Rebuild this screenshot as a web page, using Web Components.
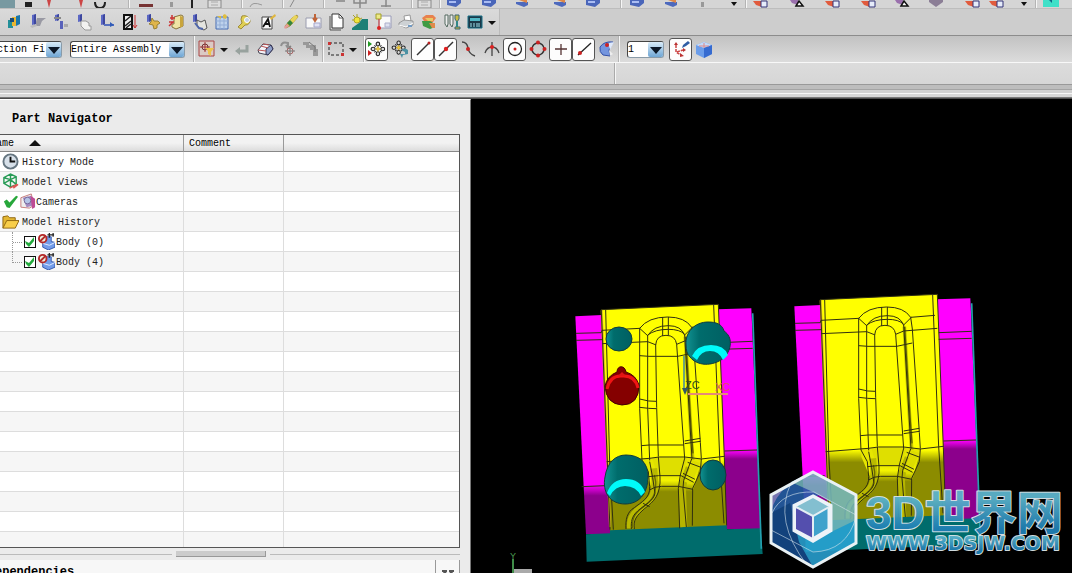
<!DOCTYPE html>
<html lang="en">
<head>
<meta charset="utf-8">
<title>Part Navigator</title>
<style>
html, body { margin: 0; height: 100%; overflow: hidden; background: #d6d6d6; }
body { font: 10px/16px "Liberation Mono", monospace; color: #222; }
</style>
</head>
<body>
<cad-app></cad-app>
<script>
const make = (tag, css, render) => customElements.define(tag, class extends HTMLElement {
  connectedCallback() {
    if (this.shadowRoot) return;
    const root = this.attachShadow({ mode: 'open' });
    root.innerHTML = '<style>' + css + '</style>' + render(this);
  }
});

/* Icon drawings on an 18 x 18 grid */
const pillar = '<path d="M3 2l4-1v10l-4 1z" fill="#5b67c4"/><path d="M5 2l2-1v10l-2 1z" fill="#3d479e"/>';
const compass = '<g fill="#ddd" stroke="#222" stroke-width="1.2"><ellipse cx="9" cy="3.500" rx="2" ry="2.200"/><ellipse cx="9" cy="14.500" rx="2" ry="2.200"/><ellipse cx="3.500" cy="9" rx="2.200" ry="2"/><ellipse cx="14.500" cy="9" rx="2.200" ry="2"/><path d="M5 5l1.500 1.500M13 5l-1.500 1.500M5 13l1.500-1.500M13 13l-1.500-1.500"/></g><path d="M9 6l1 2 2 1-2 1-1 2-1-2-2-1 2-1z" fill="#f0cb3a" stroke="#b08d1c" stroke-width=".6"/>';
const icons = {
  blocks: '<path d="M2 7h5v8H2z" fill="#238f99"/><path d="M6 4h4v9H6z" fill="#e8b632"/><path d="M10 3l4-1v9l-4 2z" fill="#1976aa"/><path d="M4 5h4v4H4z" fill="#194c7a"/>',
  p1: pillar + '<path d="M8 5h9l-4 3-2 5H7V9z" fill="#9999a3"/><path d="M1 13l6-2 1 2-5 2z" fill="#bbb"/>',
  p2: pillar.replaceAll('v10', 'v6') + '<path d="M8 8h3v8H8z" fill="#5962ba"/><path d="M12 11h4v3h-4z" fill="#aaa"/><path d="M2 5h7" stroke="#888" stroke-width="2"/>',
  p3: pillar.replaceAll('v10', 'v7') + '<path d="M6 8h5l3 2v3h2v4h-6l-4-4z" fill="#f2f2f0" stroke="#999"/>',
  p4: pillar + '<path d="M6 12h10" stroke="#5871bf" stroke-width="2"/><path d="M12 9l4 3-4 2z" fill="#315cb8"/>',
  measure: '<path d="M3 2h8v14H3z" fill="#eee" stroke="#111" stroke-width="2"/><path d="M4 8l6-5M4 13l6-5M5 15l5-4" stroke="#222" stroke-width="1.5"/><path d="M14 2v13m-2-3l2 3 2-3" stroke="#c33" fill="none"/>',
  p5: pillar.replaceAll('v10', 'v7') + '<path d="M8 5l2 3 4 0 2 2-3 2 0 3-3 1-1-4-4-1 2-2z" fill="#dfb54b" stroke="#9a8235"/>',
  book: '<path d="M7 4l7-2 2 1v10l-7 3-4-2v-3h2z" fill="#efe4a4" stroke="#88733c"/><path d="M13 3l3 1v9l-3 2z" fill="#c9a53c"/><path d="M5 2v5m-2-2h5M2 13l4-4M2 9h5" fill="none" stroke="#c33" stroke-width="1.500"/>',
  p6: pillar.replaceAll('v10', 'v7') + '<path d="M7 7l4 2 4-2 2 8-3 2-5-2-2-3z" fill="#e4e4df" stroke="#555"/><path d="M5 10l4 5 4 1" stroke="#5067aa" stroke-width="2" fill="none"/>',
  sheet: '<path d="M3 4h12v12H3z" fill="#bed2ec" stroke="#456bb1"/><path d="M3 8h12M3 12h12M7 4v12M11 4v12" stroke="#93add6"/><path d="M10 2l2-1 2 2-1 3-3-1zM4 3h4v3z" fill="#dfbd3e"/>',
  wrench: '<path d="M6 3a6 6 0 0 1 8 6q-2 4-5 3l-4 4-3-2 4-4q-2-4 0-7z" fill="#dfcf55" stroke="#a08c35"/><circle cx="11" cy="7" r="2.500" fill="#c3d0e8" stroke="#fff"/>',
  note: '<path d="M3 4h10v12H3z" fill="#fafafa" stroke="#444"/><path d="M4 14l5-8 2 8M6 11h4" stroke="#111" stroke-width="1.800" fill="none"/><path d="M11 5l5-4 1 2-5 4z" fill="#dfb63f"/>',
  pencil: '<path d="M3 13l7-8 5-3 1 2-8 9-4 2z" fill="#d7b346" stroke="#8c7620" stroke-width=".6"/><path d="M6 9l7-7 3 2-7 8z" fill="#e9d45a"/><path d="M5 10l3 3 3-3-3-3z" fill="#36853f"/><path d="M2 14l3-3 2 2-4 3z" fill="#e59b9b"/>',
  card: '<path d="M1 5h15v10H1z" fill="#f8f8f8" stroke="#9a9caf"/><path d="M9 10h6v4H9z" fill="#dfe1f2" stroke="#a4a6ca"/><path d="M10 1v6M8 5l2 3 2-3" stroke="#bf6439" stroke-width="2" fill="none"/>',
  page: '<path d="M4 1h7l4 4v10H4z" fill="#fff" stroke="#333"/><path d="M11 1v4h4M2 3v14h11" fill="none" stroke="#555"/>',
  layer: '<path d="M1 15l7-5 3-4h6v11H1z" fill="#1d8076"/><path d="M2 2l3 3M6 1v4M1 7h4M11 5l-2 1" stroke="#a7a02a"/><circle cx="6" cy="7" r="3" fill="#f0e53c" stroke="#b3a820"/>',
  mark: '<path d="M5 3h12v12H5z" fill="#f9f9fa" stroke="#999bb8"/><path d="M2 1h5v5H2z" fill="#ece887" stroke="#a3a12a"/><path d="M5 6v8" stroke="#c33"/><circle cx="5" cy="15" r="2" fill="#d22"/><path d="M11 10h5v4h-5z" fill="#dee0ef" stroke="#abaeca"/>',
  print: '<path d="M7 3l6-1 1 6-6 2z" fill="#fff" stroke="#999"/><path d="M2 10l5-3 9 1v4l-7 3-7-3z" fill="#cdd1d4" stroke="#888" stroke-width=".8"/><path d="M2 12l7 2 7-4" fill="none" stroke="#fff"/><path d="M11 12h4v2h-4z" fill="#729ac3"/>',
  swap: '<path d="M2 5l4-3h7l3 3-3 4H7L4 8z" fill="#e8814d"/><path d="M2 8h8l5 3v3l-5 2-7-3z" fill="#409b44"/><path d="M5 5h8v3H8z" fill="#e9c965"/><path d="M9 10h6v5h-3z" fill="#e08a4a"/>',
  bolts: '<path d="M2 2h3v9l-1 3-2-3zM7 2h3v9l-1 3-2-3z" fill="#eee" stroke="#53695e"/><path d="M12 2h4v4l-2 3-2-3zM12 14h5v2h-5z" fill="#c6bb43" stroke="#3d6772"/><path d="M14 8v6" stroke="#388" stroke-width="2"/>',
  calc: '<path d="M2 3h14v12H2z" fill="#1c3848" stroke="#166e85"/><path d="M4 5h10v3H4z" fill="#51b7c5"/><path d="M4 11h2M7 11h2M4 13h2M7 13h2M11 10v4M13 10v4" stroke="#9fe4ee"/>',
  filter: '<path d="M1 1h15v15H1z" fill="#dbcac4" stroke="#a44"/><path d="M2 7h10M7 2v10" stroke="#a33"/><circle cx="7" cy="7" r="3" fill="none" stroke="#733"/><path d="M7 8h9l-3 4v4l-3-2v-3z" fill="#edc44b"/>',
  undo: '<path d="M14 5v6H5" fill="none" stroke="#98a29e" stroke-width="3"/><path d="M7 7l-5 4 5 4z" fill="#98a29e"/>',
  eraser: '<path d="M2 10l5-6 8 1 2 4-5 6-9-2z" fill="#f4f4f9" stroke="#445"/><path d="M10 9l5-4 2 4-5 6-2-1z" fill="#8f9fc8" stroke="#335"/><path d="M5 6l7 2M7 4l6 1M2 10l8 1" stroke="#b55"/>',
  orbit: '<path d="M2 6q1-5 7-3v4m-2-2l2 3 3-2" fill="none" stroke="#909090" stroke-width="2"/><circle cx="11" cy="11" r="3" fill="none" stroke="#a66"/><path d="M11 6v10M6 11h10" stroke="#777"/>',
  chain: '<path d="M1 2h6v3H1zM4 5h5v3H4zM8 5h6v5H8zM11 9h5v7h-5z" fill="#999"/><path d="M7 2l6 5v5" stroke="#777" fill="none"/>',
  select: '<path d="M2 3h14v12H2z" fill="none" stroke="#222" stroke-dasharray="3 2"/><path d="M1 2h3v3H1zM14 13h3v3h-3z" fill="#c33"/>',
  snapA: '<path d="M0 1l4 3-4 3z" fill="#292"/><path d="M0 10l4 3-4 3z" fill="#c22"/><g transform="translate(2 1)scale(.88)">' + compass + '</g>',
  snapB: '<g transform="translate(0 0)scale(.85)">' + compass + '</g><path d="M10 10q4-3 7 0v4l-5 1-1 3-2-4h5v-2z" fill="#4b91a3"/>',
  line: '<path d="M3 15L15 3" stroke="#333" stroke-width="1.5"/><circle cx="15" cy="3" r="1.5" fill="#b22"/>',
  mid: '<path d="M2 16L16 2" stroke="#333" stroke-width="1.5"/><circle cx="9" cy="9" r="2.2" fill="#d22"/>',
  curve: '<path d="M2 2q5 0 6 6t7 8" fill="none" stroke="#444" stroke-width="1.5"/><circle cx="8" cy="9" r="2" fill="#c22"/>',
  cross: '<path d="M2 13q2-6 7-6t7 6M9 2v14" fill="none" stroke="#444" stroke-width="1.3"/><circle cx="9" cy="7" r="2" fill="#d22"/>',
  centre: '<circle cx="9" cy="9" r="6.5" fill="none" stroke="#222" stroke-width="1.3"/><circle cx="9" cy="9" r="1.5" fill="#c22"/>',
  quad: '<circle cx="9" cy="9" r="6" fill="none" stroke="#333" stroke-width="1.5"/><g fill="#c22"><circle cx="9" cy="2.5" r="2"/><circle cx="9" cy="15.500" r="2"/><circle cx="2.500" cy="9" r="2"/><circle cx="15.500" cy="9" r="2"/></g>',
  plus: '<path d="M9 4v11M3 9h12" stroke="#533" stroke-width="1.300"/>',
  tangent: '<path d="M3 15L16 3" stroke="#222" stroke-width="1.300"/><circle cx="5" cy="13" r="2" fill="#c22"/>',
  face: '<path d="M2 7q4-6 13-5l-4 8 1 6-7-1q-4-3-3-8z" fill="#7495de" stroke="#3552a7"/><path d="M11 3l5-1-4 8-1-4z" fill="#dfe9fa"/><path d="M11 10l4 4-3 2z" fill="#eee"/><circle cx="9" cy="5" r="2" fill="#c22"/>',
  triad: '<path d="M4 5v7l5 3M5 12l6-2" fill="none" stroke="#c44" stroke-width="1.500" stroke-dasharray="3 1"/><path d="M2 5l2-3 2 3zM8 13l4 3-4 1zM11 8l3 2-3 2z" fill="#b33"/><path d="M10 8l1-3 5-4 2 2-4 3z" fill="#2f5da4"/>',
  cube: '<path d="M1 5l8-3 8 3v9l-8 4-8-4z" fill="#6b9dea"/><path d="M1 5l8-3 8 3-8 3z" fill="#c5dcfa"/><path d="M9 8l8-3v9l-8 4z" fill="#366bd0"/><path d="M9 3v5M4 6h10" stroke="#d88"/>',
  drop: '<path d="M5 8h8l-4 4z" fill="#111"/>',
  /* lower ends of the icons in the first strip */
  e_teal: '<path d="M0 0h18v12H0z" fill="#7899a1"/>', e_black: '<path d="M6 2h7v5H6z" fill="#222"/>',
  e_red: '<path d="M7 0h4l-2 8z" fill="#c44"/>', e_arc: '<path d="M4 2q0 6 5 6t5-6" fill="none" stroke="#222" stroke-width="2"/>',
  e_bar: '<path d="M2 4h14v3H2z" fill="#733"/>', e_gray: '<path d="M7 2h3v5H7z" fill="#999"/>', e_tick: '<path d="M9 0v8" stroke="#222" stroke-width="2"/>',
  e_box: '<path d="M2 0h13v8H2z" fill="#ddd" stroke="#888"/><path d="M5 2h7M5 5h7" stroke="#aaa"/>',
  e_curve: '<path d="M1 7q2-6 12-2" fill="none" stroke="#999"/>', e_slash: '<path d="M5 7l4-7" stroke="#888"/>',
  e_line: '<path d="M4 0h9v2H4z" fill="#999"/>', e_grid: '<path d="M3 0v3h12V0M9 0v8" fill="none" stroke="#888" stroke-width="1.500"/>',
  e_tee: '<path d="M9 0v7M4 6h10" stroke="#888" stroke-width="1.500"/>',
  e_blue: '<path d="M2 0h14v3l-5 4-9-2z" fill="#4a66ba"/><path d="M4 1h7v2H4z" fill="#a9bcf3"/>',
  e_mix: '<path d="M2 2h12v3l-4 2-8-3z" fill="#4d69bd"/><path d="M5 0h8v3z" fill="#de8848"/>',
  e_orange: '<path d="M2 1h9v6l-6-2z" fill="#e15b3d"/><path d="M10 1h6v6h-6z" fill="#e6ecfa" stroke="#337"/>',
  e_purple: '<path d="M2 0h8v5L4 3z" fill="#9a70ad"/><path d="M8 6l3-5 4 5z" fill="#fff" stroke="#111" stroke-width="1.500"/>',
  e_diamond: '<path d="M2 0h14v2L9 7 2 2z" fill="#8b7e96"/>',
  e_cyan: '<path d="M1 0h16v7H1z" fill="#3fe0c8"/><path d="M7 0h3v3z" fill="#168"/>',
  e_drop: '<path d="M6 2h6l-3 4z" fill="#111"/>',
  /* navigator */
  clock: '<circle cx="9" cy="9" r="7.500" fill="#d7e0e9" stroke="#667681" stroke-width="2"/><path d="M9 4v5h5" stroke="#111" stroke-width="2" fill="none"/>',
  views: '<path d="M2 5l7-4 6 3v8l-6 3-7-4zM2 5l7 2 6-3M9 1v14M2 11l7-4 6 5" stroke="#279b55" fill="none" stroke-width="1.500"/><path d="M8 16l8-4M12 16l5-4" stroke="#d55" fill="none" stroke-width="1.500"/>',
  check: '<path d="M2 9l3-2 3 3 7-7 2 1-9 12-3-1z" fill="#27a73b"/>',
  camera: '<path d="M2 5l11-4 3 12-5 3-9-1z" fill="#eee" stroke="#c67979"/><path d="M4 5l9-2 3 10-8 2z" fill="#a58ac1"/><path d="M12 3l5 3v9l-3 2z" fill="#be4c94"/><circle cx="9" cy="8" r="3.500" fill="#b4c4e7" stroke="#766899"/>',
  folder: '<path d="M1 16V4l5-1 2 2h6v4" fill="#e3b733" stroke="#8e650f"/><path d="M1 16l4-8h13l-4 8z" fill="#f8ce4a" stroke="#8e650f"/>',
  body: '<path d="M5 10l4-2V4h5v5l4 1v5l-7 3-6-3z" fill="#729ce9" stroke="#3458ad"/><path d="M5 11l7 2 6-3" fill="none" stroke="#e3edff"/><circle cx="5" cy="6" r="4" fill="#eed" stroke="#b32828" stroke-width="2"/><path d="M2 9l6-6" stroke="#b32828" stroke-width="2"/><path d="M10 2h7M12 0v5M16 0v4" stroke="#222" stroke-width="1.300"/>'
};

make('tool-icon', ':host{display:block;width:18px;height:18px}svg{display:block;width:100%;height:100%}',
  el => `<svg viewBox="0 0 18 18" aria-hidden="true">${icons[el.getAttribute('name')]}</svg>`);

make('tool-button', `:host{display:block;flex:none;width:23px;height:23px}
:host([narrow]){width:12px}
button{all:unset;box-sizing:border-box;width:100%;height:100%;display:flex;align-items:center;justify-content:center;overflow:hidden}
tool-icon{flex:none}
:host([pressed]) button{background:#fdfdfd;border:1px solid #555;border-radius:3px}`,
  el => `<button aria-label="${el.getAttribute('icon')}"><tool-icon name="${el.getAttribute('icon')}"></tool-icon></button>`);

make('tool-divider', ':host{display:block;flex:none;width:1px;align-self:stretch;background:#b4b4b4;border-right:1px solid #f6f6f6}', () => '');

make('combo-box', `:host{display:block;flex:none;position:relative;height:17px}
select{appearance:none;box-sizing:border-box;width:100%;height:17px;margin:0;padding:0 15px 0 0;border:1px solid #555;border-color:#444 #8a9ba8 #8a9ba8 #444;border-radius:3px;background:#fff;color:#000;font:inherit;line-height:15px;display:block}
span{position:absolute;right:1px;top:1px;width:15px;height:15px;background:linear-gradient(#d9ecfa,#6fa6d4);border-radius:2px;pointer-events:none}
span::after{content:"";position:absolute;left:2px;top:5px;border:6px solid transparent;border-top:7px solid #0c1828;border-bottom:0}`,
  el => `<select aria-label="${el.getAttribute('label')}"><option>${el.getAttribute('value')}</option></select><span></span>`);

make('edge-strip', `:host{display:flex;align-items:flex-start;height:8px;overflow:hidden;background:#d5d5d5;border-bottom:1px solid #bdbdbd}
tool-icon{flex:none}`, () => {
  /* each entry: centre of the item along the strip, icon name */
  const spec = [[6,'e_teal'],[28,'e_black'],[49,'e_red'],[81,'e_red'],[100,'e_arc'],[129,'|'],[146,'e_bar'],[172,'e_gray'],[192,'e_tick'],[215,'e_box'],[242,'|'],[258,'e_curve'],[283,'|'],[294,'e_slash'],[324,'|'],[341,'e_line'],[360,'e_grid'],[386,'e_tee'],[412,'|'],[425,'e_box'],[440,'|'],[454,'e_blue'],[489,'e_blue'],[523,'e_mix'],[561,'e_mix'],[593,'e_blue'],[621,'|'],[637,'e_blue'],[672,'e_mix'],[703,'e_gray'],[734,'e_drop'],[746,'|'],[760,'e_orange'],[797,'e_purple'],[832,'e_orange'],[868,'e_orange'],[902,'e_purple'],[936,'e_diamond'],[972,'e_orange'],[996,'e_orange'],[1024,'e_drop'],[1036,'|'],[1051,'e_cyan']];
  let end = 0;
  return spec.map(([c, n]) => {
    const half = n === '|' ? 1 : 9, gap = c - half - end;
    end = c + half;
    return n === '|' ? `<tool-divider style="margin-left:${gap}px"></tool-divider>` : `<tool-icon name="${n}" style="margin-left:${gap}px"></tool-icon>`;
  }).join('');
});

make('main-strip', `:host{display:flex;height:26px;background:#cdcdcd;border-bottom:1px solid #8c8c8c}
div{display:flex;align-items:center;padding:0 1px 0 3px;background:linear-gradient(#dadada,#cfcfcf);border-right:1px solid #bbb}`,
  () => '<div>' + ['blocks','p1','p2','p3','p4','measure','p5','book','p6','sheet','wrench','note','pencil','card','page','layer','mark','print','swap','bolts','calc'].map(i => `<tool-button icon="${i}"></tool-button>`).join('') + '<tool-button narrow icon="drop"></tool-button></div>');

make('selection-strip', `:host{display:flex;align-items:center;height:26px;background:linear-gradient(#c2c2c2,#dcdcdc);border-bottom:1px solid #f8f8f8}
.filter{width:66px;margin:0 8px 0 -4px}.scope{width:115px}.layer{width:37px;margin:0 5px 0 7px}
.gap{margin-left:8px}.near{margin-left:4px}`, () => {
  const b = (i, p = '') => `<tool-button icon="${i}" ${p}></tool-button>`;
  return `<combo-box class="filter" label="Filter" value="ction Fi"></combo-box>
<combo-box class="scope" label="Scope" value="Entire Assembly"></combo-box>
<tool-divider class="gap"></tool-divider>${b('filter')}${b('drop', 'narrow')}${b('undo')}${b('eraser')}${b('orbit')}${b('chain')}
<tool-divider></tool-divider>${b('select')}${b('drop', 'narrow')}<tool-divider class="near"></tool-divider>
${b('snapA','pressed')}${b('snapB')}${b('line','pressed')}${b('mid','pressed')}${b('curve')}${b('cross')}${b('centre','pressed')}${b('quad')}${b('plus','pressed')}${b('tangent','pressed')}${b('face')}
<tool-divider></tool-divider><combo-box class="layer" label="Layer" value="1"></combo-box>${b('triad','pressed')}${b('cube')}`;
});

make('cue-line', `:host{display:block}
.cells{display:flex;height:21px;background:linear-gradient(#dcdcdc,#d6d6d6)}
.cells div:first-child{flex:0 0 614px;border-right:1px solid #aaa}
.cells div:last-child{flex:1;border-left:1px solid #f6f6f6}
.rail{height:15px;background:linear-gradient(#999 0 1px,#bdbdbd 1px 5px,#a4a4a4 5px 6px,#d0d0d0 6px 9px,#f5f5f5 9px 10px,#d6d6d6 10px 13px,#777 13px 14px,#4c4c4c 14px)}`,
  () => '<div class="cells"><div></div><div></div></div><div class="rail"></div>');

const tick = "url(\"data:image/svg+xml,%3Csvg xmlns='http://www.w3.org/2000/svg' viewBox='0 0 10 10'%3E%3Cpath d='M0 4l4 2 5-6v4L4 10 1 7z' fill='%2322aa3c'/%3E%3C/svg%3E\")";
make('part-navigator', `:host{display:flex;flex-direction:column;flex:0 0 471px;box-sizing:border-box;min-height:0;padding-right:10px;background:#ebebeb;border-top:1px solid #fff;border-right:1px solid #777}
h2{margin:0;padding:11px 12px 7px;font-size:12px;line-height:16px;font-weight:700;color:#000}
.list{flex:1;min-height:0;overflow:hidden;border:solid #555;border-width:1px 1px 1px 0;background:#fff}
table{width:100%;border-collapse:separate;border-spacing:0;table-layout:fixed}
th,td{box-sizing:border-box;padding:0;text-align:left;font-weight:400;border-right:1px solid #ddd;white-space:nowrap}
th:last-child,td:last-child{border-right:0}
th{height:17px;line-height:14px;padding-top:2px;color:#000;border-bottom:1px solid #888;border-right-color:#999;background:linear-gradient(#f2f2f2 50%,#dcdcdc)}
th:nth-child(2){padding-left:5px}
th i{display:inline-block;margin-left:15px;border:6px solid transparent;border-top:0;border-bottom:6px solid #111}
th:first-child span{margin-left:-4px}
td{height:20px;border-bottom:1px solid #ddd}
tr:nth-child(even) td{background:#f6f6f6}
label,.item{display:flex;align-items:center;height:19px;padding-left:2px;gap:3px}
.item span,label span{padding-top:2px}
.item tool-icon,label tool-icon{width:17px;height:17px;flex:none}
.cam{gap:0}
label{gap:1px;padding-left:12px}
label::before{content:"";width:10px;height:20px;box-sizing:border-box;border-left:1px dotted #999;background:repeating-linear-gradient(90deg,#999 0 1px,transparent 1px 2px) 0 10px/100% 1px no-repeat}
tr.last label::before{height:11px;align-self:flex-start}
input{appearance:none;box-sizing:border-box;width:12px;height:12px;margin:0 1px;border:1px solid #111;background:#fff ${tick} center/10px no-repeat}
.grip{flex:none;display:flex;align-items:center;gap:4px;height:12px}
.grip::before{content:"";width:172px;border-top:1px solid #bbb}
.grip::after{content:"";flex:1;border-top:1px solid #bbb}
.grip b{width:90px;height:6px;box-sizing:border-box;background:#ccc;border:solid #999;border-width:0 1px 1px 0}
.deps{flex:none;display:flex;justify-content:space-between;height:13px;overflow:hidden;background:#f7f7f7}
.deps h3{margin:0 0 0 -5px;padding-top:4px;font-size:12px;line-height:16px;color:#000}
.deps button{all:unset;box-sizing:border-box;width:25px;height:24px;padding:6px 6px 0;border:solid #999;border-width:0 1px}
.deps svg{display:block}`, () => {
  const row = c => `<tr><td>${c}</td><td></td><td></td></tr>`;
  const item = (ics, text, cls = '') => row(`<div class="item ${cls}">${ics.map(i => `<tool-icon name="${i}"></tool-icon>`).join('')}<span>${text}</span></div>`);
  const body = (n, cls) => `<tr class="${cls}"><td><label><input type="checkbox" checked><tool-icon name="body"></tool-icon><span>Body (${n})</span></label></td><td></td><td></td></tr>`;
  return `<h2>Part Navigator</h2><div class="list"><table>
<colgroup><col style="width:184px"><col style="width:100px"><col></colgroup>
<thead><tr><th><span>ame</span><i></i></th><th>Comment</th><th></th></tr></thead><tbody>
${item(['clock'], 'History Mode')}${item(['views'], 'Model Views')}${item(['check', 'camera'], 'Cameras', 'cam')}${item(['folder'], 'Model History')}
${body(0, '')}${body(4, 'last')}${row('').repeat(16)}</tbody></table></div>
<div class="grip"><b></b></div>
<div class="deps"><h3>ependencies</h3><button aria-label="Expand"><svg width="12" height="10" viewBox="0 0 12 10"><path d="M0 0h5v2H4l2 3 2-3H7V0h5v2h-1L7 9H5L1 2H0z" fill="#555"/></svg></button></div>`;
});

/* Brand mark that floats over the lower right corner of the scene */
make('site-mark', ':host{display:block;position:absolute;right:0;bottom:0;width:304px;height:106px}svg{display:block}', () => `
<svg width="304" height="106" viewBox="768 467 304 106">
<defs><linearGradient id="t" x2="0" y2="1"><stop offset=".2" stop-color="#5db4cc"/><stop offset=".8" stop-color="#2080b4"/></linearGradient></defs>
<g opacity=".86"><path d="M813 472l-42 23v48l32-17v-23l10-6 28-8z" fill="#2862ae"/>
<path d="M813 472l43 23v34l-25 9v-36l-18-10-22-10z" fill="#75b9c1"/>
<path d="M813 472q-35 12-42 40v-17z" fill="#8a87cf"/>
<path d="M856 520v23l-43 24-42-24 32-14 10 11 18-8z" fill="#2ba6d8"/>
<path d="M771 543l42 24-14-25-9-39-19 10z" fill="#164d91"/></g>
<path d="M772 513q10-22 42-21l42 23M856 517q-9 34-43 35l-42-22M791 483q-18 38 16 82" fill="none" stroke="#d5e5ed" opacity=".6"/>
<path d="M813 497l17 9v24l-17 10-18-10v-24z" fill="#3fa2cc" stroke="#edf3f8" stroke-width="5"/>
<path d="M813 498l16 9-16 9-17-9z" fill="#83bfd0"/><path d="M796 507l17 9v22l-17-9z" fill="#544fae"/>
<path d="M796 507l17 9 16-9M813 516v22" fill="none" stroke="#e4eef4" stroke-width="2"/>
<path d="M813 472l43 23v48l-43 24-42-24v-48z" fill="none" stroke="#e9f1f4" stroke-width="3"/>
<g fill="url(#t)" stroke="#dbe6ea" stroke-width="2" paint-order="stroke" stroke-linejoin="round" font-weight="700" opacity=".95">
<text x="866" y="529" font-family="Liberation Sans, Noto Sans CJK SC, sans-serif" font-size="46">3D世界网</text>
<text x="866" y="550" font-family="DejaVu Sans, sans-serif" font-size="19">WWW.3DSJW.COM</text></g>
</svg>`);

make('scene-view', `:host{display:block;flex:1;min-width:0;position:relative;overflow:hidden;background:#000}
.scene{display:block;width:100%;height:100%}`, () => `
<svg class="scene" viewBox="471 99 601 474" preserveAspectRatio="xMinYMax slice" aria-hidden="true">
<defs>
<linearGradient id="pl" gradientUnits="userSpaceOnUse" x1="0" y1="570" x2="0" y2="602"><stop stop-color="#f0f"/><stop offset="1" stop-color="#8c008c"/></linearGradient>
<linearGradient id="pr" gradientUnits="userSpaceOnUse" x1="0" y1="466" x2="0" y2="492"><stop stop-color="#f0f"/><stop offset="1" stop-color="#8c008c"/></linearGradient>
<linearGradient id="yl" gradientUnits="userSpaceOnUse" x1="0" y1="495" x2="0" y2="532"><stop stop-color="#ff0"/><stop offset="1" stop-color="#8c8c00"/></linearGradient>
<linearGradient id="ym" gradientUnits="userSpaceOnUse" x1="0" y1="535" x2="0" y2="590"><stop stop-color="#e6e600"/><stop offset=".4" stop-color="#f4f400"/><stop offset="1" stop-color="#8c8c00"/></linearGradient>
<linearGradient id="ball"><stop stop-color="#119292"/><stop offset=".3" stop-color="#006c6c"/><stop offset="1" stop-color="#005f62"/></linearGradient>
<g id="part" transform="scale(.33333)" stroke-linejoin="round">
<path d="M43 64l80-4 27 658H75z" fill="url(#pl)"/>
<path d="M470 43l101-3 28 663H495z" fill="url(#pr)"/>
<path d="M75 718l72-3V704l350-16 1 15 101-3 6 77-528 23z" fill="#006c6c"/>
<path d="M121 44l351-16 18 460 7 203-350 15z" fill="url(#yl)"/>
<path d="M122 46l25 650" stroke="#d3b322" stroke-width="6"/>
<path d="M243 490l178-2v12l-26 92h-40l-1 20h-52l-26-22-32-75z" fill="url(#ym)"/>
<path d="M294 487l-20 3 15 52h75l15-54z" fill="#dfdf00"/>
<g fill="none"><path d="M278 520l4 40C284 612 260 620 238 640 210 660 208 676 208 700" stroke="#b9b900" stroke-width="21"/>
<path d="M280 540l4 20C286 612 264 620 242 640 216 660 214 676 214 700" stroke="#6c6c00" stroke-width="4"/>
<path d="M385 518l-18 44-3 24 4 110" stroke="#b5b500" stroke-width="22"/><path d="M406 500l-25 64" stroke="#dddd00" stroke-width="24"/>
<path d="M373 125l15 260 7 110" stroke="#c4c400" stroke-width="11"/><path d="M374 125l16 270 6 80" stroke="#5a5a00" stroke-width="4"/>
<path d="M575 55l26 706" stroke="#249fae" stroke-width="5"/></g>
<g fill="none" stroke="#302f10" stroke-width="3">
<path d="M121 44l351-16 18 460 7 203M121 44l26 660M134 44l12 460 11 200M458 30l18 455 13 200"/>
<path d="M45 115l76-2 2-7 114-6M45 136l78-2M123 146l137-6 23 9M392 97l73-6M347 148l24-10 101-8M476 143l99-4M476 163l99-3M490 468l98-3M62 575l72-3"/>
<path d="M236 100q26-34 84-34 52 0 72 31M236 100l24 22M260 122q18-30 62-30 39 0 49 29M260 120q23-17 62-17 35 0 49 15M371 120l23-23M284 150q2-29 31-29 28 0 32 27M305 66v57M322 66v55"/>
<path d="M236 100v240l7 155M260 120v220l6 156M284 148l3 190 5 146M347 148l24 343M371 120l22 371M392 97l5 35 21 310 3 49"/>
<path d="M236 182l28 2h86l47-10M236 312l27 6 23 1M236 337l27 3 23 1M371 438l47-8M371 446l47-7M241 452l24-2h103M137 500l128-10 30-4h76l50 6 69-8"/>
<path d="M243 495l19 35 4 45C268 610 240 622 220 638 198 650 193 675 195 702M266 500l9 48 7 47C278 618 250 630 230 648 212 664 210 680 211 702M292 485l5 60C300 600 278 620 252 640 226 662 216 676 220 702"/>
<path d="M371 490l-13 50-6 40 4 120M392 492l-24 64-2 24 10 116M421 492l-3 38-23 50-1 112M262 545l30-3h68l38 20M266 585q14-11 36-11h50l44 9M246 625l20 10M380 502l40 15M366 535l36 18"/>
</g></g>
</defs>
<use href="#part" x="561" y="295"/><use href="#part" x="780" y="285"/>
<g stroke="#123c3c">
<ellipse cx="619" cy="339" rx="13" ry="12" fill="url(#ball)"/>
<path d="M686 345c-1-13 9-23 22-23 8 0 14 2 16 9 9 6 8 18 0 27-12 9-27 8-34-1-3-3-4-7-4-12z" fill="url(#ball)"/>
<path d="M605 477c2-14 10-22 21-22 14 0 22 8 22 21 0 19-10 28-23 28-15 0-23-12-20-27z" fill="url(#ball)"/>
<ellipse cx="713" cy="475" rx="13" ry="15" fill="url(#ball)"/></g>
<path d="M692 356q5-11 19-11 13 0 17 10l-5 5q-4-9-13-9-9 0-13 9z" fill="#00fafa"/>
<path d="M607 493q5-14 19-14 14 0 19 13l-4 4q-5-10-16-10-10 0-15 10z" fill="#00fafa"/>
<path d="M605 386q2-10 12-14c0-7 8-7 9 0q10 3 13 13 0 20-17 20-16-1-17-19z" fill="#850000" stroke="#400"/>
<path d="M607 389q3-14 15-13 13-1 16 12" fill="none" stroke="#f01414" stroke-width="3"/><path d="M618 376l4-4 4 4z" fill="#e01414"/>
<g font-family="Liberation Sans, sans-serif" font-size="11"><text x="685" y="389" fill="#31501e">ZC</text><text x="715" y="391" fill="#df5360">XC</text></g>
<path d="M684 356v32" stroke="#6fa777" stroke-width="2"/><path d="M682 388l3 7 3-7z" fill="#315765"/><path d="M688 394h40" stroke="#e58a78" stroke-width="2"/>
<text x="510" y="559" font-family="Liberation Sans, sans-serif" font-size="9" fill="#4a9a50">Y</text>
<path d="M513 559v14" stroke="#3f8c48" stroke-width="2"/><path d="M514 569h18v4h-18z" fill="#aaa"/>
</svg><site-mark></site-mark>`);

make('cad-app', ':host{display:flex;flex-direction:column;height:100vh;overflow:hidden}edge-strip,main-strip,selection-strip,cue-line{flex:none}main{flex:1;display:flex;min-height:0}',
  () => '<edge-strip></edge-strip><main-strip></main-strip><selection-strip></selection-strip><cue-line></cue-line><main><part-navigator></part-navigator><scene-view></scene-view></main>');
</script>
</body>
</html>
